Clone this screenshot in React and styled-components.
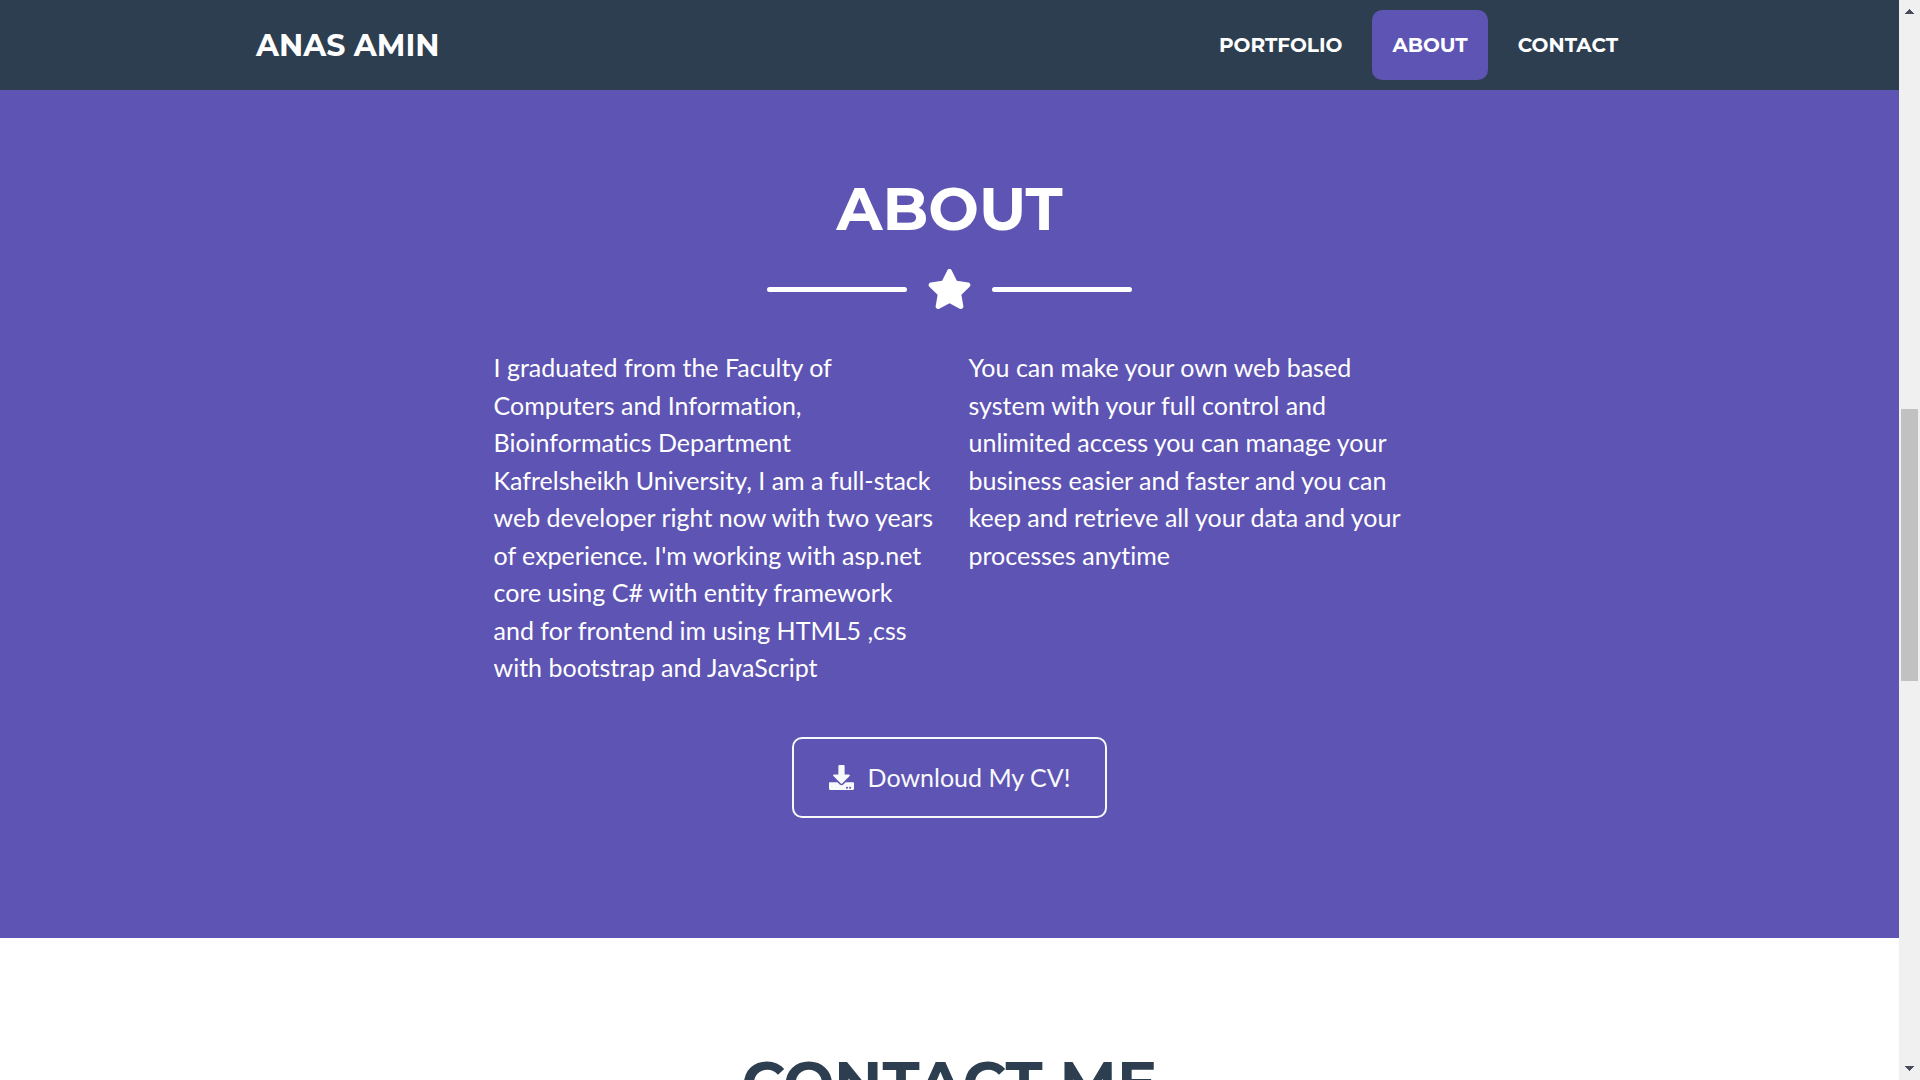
import React from "react";
import styled, { createGlobalStyle, css } from "styled-components";
import { FaStar, FaDownload } from "react-icons/fa";

const ink = "#2c3e50";
const violet = "#5e54b3";
const displayFont = css`
  font-family: Montserrat, Inter, "Liberation Sans", sans-serif;
  font-weight: 700;
  text-transform: uppercase;
`;

const GlobalStyle = createGlobalStyle`
  *, *::before, *::after { box-sizing: border-box; }
  body {
    margin: 0;
    background: #fff;
    color: ${ink};
    font-family: Lato, "Liberation Sans", sans-serif;
    font-size: 20px;
    line-height: 1.5;
    font-variant-ligatures: no-common-ligatures;
  }
  h2, p, ul { margin: 0; padding: 0; }
  a { color: inherit; text-decoration: none; }
`;

const Shell = styled.div`
  display: grid;
  grid-template-columns: minmax(0, 1fr) 21px;
  height: 100vh;
  overflow: hidden;
`;

const Page = styled.div`
  min-height: 0;
  overflow: hidden;
`;

const Navbar = styled.nav`
  background: ${ink};
  color: #fff;
`;

const Container = styled.div`
  width: 100%;
  max-width: 1425px;
  margin: 0 auto;
  padding: 0 19px;
`;

const NavRow = styled(Container)`
  display: flex;
  align-items: center;
  justify-content: space-between;
  padding-top: 10px;
  padding-bottom: 10px;
`;

const Brand = styled.a`
  ${displayFont}
  font-size: 30px;
`;

const NavList = styled.ul`
  display: flex;
  gap: 10px;
  padding-right: 5px;
  list-style: none;
`;

const NavLink = styled.a`
  ${displayFont}
  display: block;
  padding: 20px;
  border-radius: 10px;
  line-height: 30px;
  background: ${(p) => (p.$active ? violet : "transparent")};
`;

const Section = styled.section`
  padding: ${(p) => (p.$tone === "violet" ? "83px 0 120px" : "109px 0 120px")};
  background: ${(p) => (p.$tone === "violet" ? violet : "#fff")};
  color: ${(p) => (p.$tone === "violet" ? "#fff" : ink)};
`;

const Heading = styled.h2`
  ${displayFont}
  font-size: 60px;
  line-height: 72px;
  text-align: center;
`;

const Divider = styled.div`
  display: flex;
  align-items: center;
  justify-content: center;
  gap: 20px;
  height: 40px;
  margin: 24px 0 40px;
`;

const DividerLine = styled.span`
  width: 140px;
  height: 5px;
  border-radius: 20px;
  background: currentColor;
`;

const StarIcon = styled(FaStar)`
  width: 45px;
  height: 40px;
`;

const Columns = styled.div`
  display: grid;
  grid-template-columns: minmax(0, 440px) minmax(0, 1fr);
  gap: 35px;
  max-width: 912px;
  margin: 0 auto;
`;

const Lead = styled.p`
  font-size: 25px;
  line-height: 1.5;
`;

const Actions = styled.div`
  display: flex;
  justify-content: center;
  margin-top: 50px;
`;

const OutlineLink = styled.a`
  display: inline-flex;
  align-items: center;
  gap: 14px;
  padding: 20px 35px;
  border: 2px solid #f8f9fa;
  border-radius: 10px;
  color: #f8f9fa;
  font-size: 25px;
  line-height: 37px;
`;

const Scrollbar = styled.div`
  display: flex;
  flex-direction: column;
  background: #f0f0f0;
`;

const ScrollArrow = styled.svg`
  display: block;
  width: 21px;
  height: 21px;
  fill: #484c5c;
`;

const Track = styled.div`
  flex: 1;
  display: grid;
  grid-template-rows: 388fr 272fr 378fr;
  padding: 0 2px;
`;

const Thumb = styled.div`
  grid-row: 2;
  background: #c1c1c1;
`;

const links = [
  { label: "Portfolio", href: "#portfolio" },
  { label: "About", href: "#about", active: true },
  { label: "Contact", href: "#contact" },
];

export default function App() {
  return (
    <>
      <GlobalStyle />
      <Shell>
        <Page>
          <Navbar>
            <NavRow>
              <Brand href="#top">Anas Amin</Brand>
              <NavList>
                {links.map((l) => (
                  <li key={l.label}>
                    <NavLink href={l.href} $active={l.active}>
                      {l.label}
                    </NavLink>
                  </li>
                ))}
              </NavList>
            </NavRow>
          </Navbar>

          <Section id="about" $tone="violet">
            <Container>
              <Heading>About</Heading>
              <Divider>
                <DividerLine />
                <StarIcon aria-hidden="true" />
                <DividerLine />
              </Divider>
              <Columns>
                <Lead>
                  I graduated from the Faculty of Computers and Information,
                  Bioinformatics Department
                  <br />
                  Kafrelsheikh University, I am a full-stack web developer right
                  now with two years of experience. I'm working with asp.net
                  core using C# with entity framework and for frontend im using
                  HTML5 ,css with bootstrap and JavaScript
                </Lead>
                <Lead>
                  You can make your own web based system with your full control
                  and unlimited access you can manage your business easier and
                  faster and you can keep and retrieve all your data and your
                  processes anytime
                </Lead>
              </Columns>
              <Actions>
                <OutlineLink href="#cv">
                  <FaDownload aria-hidden="true" />
                  Downloud My CV!
                </OutlineLink>
              </Actions>
            </Container>
          </Section>

          <Section id="contact">
            <Container>
              <Heading>Contact Me</Heading>
            </Container>
          </Section>
        </Page>

        <Scrollbar aria-hidden="true">
          <ScrollArrow viewBox="0 0 21 21">
            <path d="M10 9h1v1h1v1h1v1h1v1h1v1H6v-1h1v-1h1v-1h1v-1h1z" />
          </ScrollArrow>
          <Track>
            <Thumb />
          </Track>
          <ScrollArrow viewBox="0 0 21 21">
            <path d="M6 7h9v1h-1v1h-1v1h-1v1h-1v1h-1v-1H9v-1H8V9H7V8H6z" />
          </ScrollArrow>
        </Scrollbar>
      </Shell>
    </>
  );
}
